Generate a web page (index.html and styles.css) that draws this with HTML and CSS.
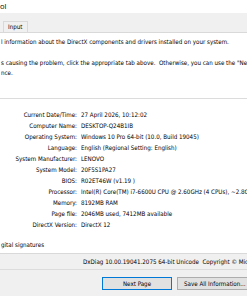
FILE: index.html
```html
<!DOCTYPE html>
<html lang="en">
<head>
    <meta charset="UTF-8">
    <title>DirectX Diagnostic Tool</title>
    <link rel="stylesheet" href="styles.css">
</head>
<body>
    <div class="titlebar">ol</div>

    <div class="tabstrip">
        <span class="tab">Input</span>
    </div>

    <div class="page">
        <p class="intro">l information about the DirectX components and drivers installed on your system.</p>
        <p class="intro spaced">s causing the problem, click the appropriate tab above.&nbsp; Otherwise, you can use the "Next Page" button below to visit each page in seque</p>
        <p class="intro">nce.</p>

        <div class="group">
            <div class="info">
                <span class="label">Current Date/Time:</span><span class="value">27 April 2026, 10:12:02</span>
                <span class="label">Computer Name:</span><span class="value">DESKTOP-Q24B1IB</span>
                <span class="label">Operating System:</span><span class="value">Windows 10 Pro 64-bit (10.0, Build 19045)</span>
                <span class="label">Language:</span><span class="value">English (Regional Setting: English)</span>
                <span class="label">System Manufacturer:</span><span class="value">LENOVO</span>
                <span class="label">System Model:</span><span class="value">20F5S1PA27</span>
                <span class="label">BIOS:</span><span class="value">R02ET46W (v1.19 )</span>
                <span class="label">Processor:</span><span class="value">Intel(R) Core(TM) i7-6600U CPU @ 2.60GHz (4 CPUs), ~2.8GHz</span>
                <span class="label">Memory:</span><span class="value">8192MB RAM</span>
                <span class="label">Page file:</span><span class="value">2046MB used, 7412MB available</span>
                <span class="label">DirectX Version:</span><span class="value">DirectX 12</span>
            </div>
        </div>

        <div class="check">gital signatures</div>
    </div>

    <div class="version">DxDiag 10.00.19041.2075 64-bit Unicode&nbsp; Copyright © Microsoft. All rights reserved.</div>

    <div class="buttons">
        <button class="btn btn-default">Next Page</button>
        <button class="btn">Save All Information...</button>
    </div>
</body>
</html>
```

FILE: styles.css
```css
    body {
        margin: 0;
        width: 247px;
        height: 296px;
        overflow: hidden;
        background: #f0f0f0;
        color: #000;
        font-family: "DejaVu Sans Condensed", "DejaVu Sans", sans-serif;
        font-stretch: condensed;
        font-size: 6.2px;
        white-space: nowrap;
    }

    .titlebar {
        height: 13px;
        line-height: 12px;
        background: #ffffff;
        font-family: "Open Sans", sans-serif;
        font-stretch: normal;
        font-size: 7.5px;
        color: #000;
    }

    /* Tab header row */
    .tabstrip {
        height: 19px;
        display: flex;
        align-items: flex-end;
        padding-left: 3px;
    }

    .tab {
        height: 10px;
        line-height: 10px;
        padding: 0 5px 0 4px;
        border: 1px solid #d9d9d9;
        border-bottom: none;
        background: #f0f0f0;
    }

    .page {
        height: 220px;
        border-top: 1px solid #d9d9d9;
        border-bottom: 1px solid #d9d9d9;
        background: #ffffff;
        overflow: hidden;
    }

    .intro {
        margin: 0;
        padding-left: 1px;
        line-height: 10px;
    }

    .intro:first-child {
        margin-top: 4px;
    }

    .spaced {
        margin-top: 11px;
    }

    .group {
        margin-top: 20px;
        padding-top: 10px;
        border-top: 1px solid #dcdcdc;
    }

    .info {
        display: grid;
        grid-template-columns: 77px 1fr;
        column-gap: 4px;
        grid-auto-rows: 11px;
        line-height: 11px;
    }

    .label {
        text-align: right;
    }

    .value {
        overflow: hidden;
    }

    .check {
        margin-top: 10px;
        line-height: 10px;
        padding-left: 1px;
    }

    .version {
        height: 15px;
        line-height: 15px;
        padding-left: 83px;
        border-bottom: 1px solid #dcdcdc;
    }

    .buttons {
        display: flex;
        gap: 5px;
        padding: 7px 0 0 102px;
    }

    .btn {
        flex: none;
        height: 13px;
        padding: 0;
        border: 1px solid #adadad;
        background: #e1e1e1;
        color: #000;
        font-family: inherit;
        font-stretch: condensed;
        font-size: 6.2px;
        line-height: 11px;
        text-align: left;
    }

    .btn-default {
        width: 70px;
        border-color: #0078d7;
        text-align: center;
    }

    .btn:not(.btn-default) {
        width: 90px;
        padding-left: 6px;
    }
```
